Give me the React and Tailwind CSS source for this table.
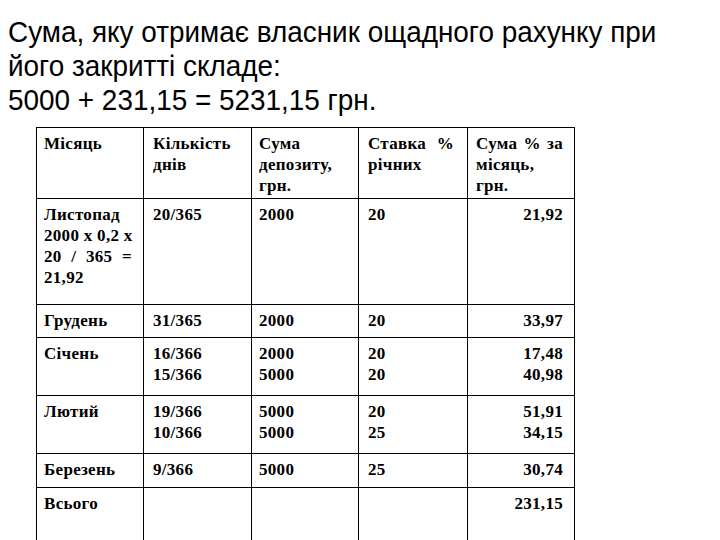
export default function App() {
  const td = "border border-black align-top pl-[7px] pr-[11px] pt-[5px]";
  const J = "whitespace-nowrap text-justify [text-align-last:justify]";
  const rows = [
    { h: "h-[106px]", c: [["Листопад", "2000 x 0,2 x", "20 / 365 =", "21,92"], ["20/365"], ["2000"], ["20"], ["21,92"]] },
    { h: "h-[33px]", c: [["Грудень"], ["31/365"], ["2000"], ["20"], ["33,97"]] },
    { h: "h-[58px]", c: [["Січень"], ["16/366", "15/366"], ["2000", "5000"], ["20", "20"], ["17,48", "40,98"]] },
    { h: "h-[58px]", c: [["Лютий"], ["19/366", "10/366"], ["5000", "5000"], ["20", "25"], ["51,91", "34,15"]] },
    { h: "h-[34px]", c: [["Березень"], ["9/366"], ["5000"], ["25"], ["30,74"]] },
    { h: "h-[80px]", c: [["Всього"], [], [], [], ["231,15"]] },
  ];
  return (
    <div className="w-[720px] h-[540px] overflow-hidden bg-white text-black">
      <div className="pl-[8px] pt-[15px] font-['Liberation_Sans',Arial,sans-serif] text-[30px] leading-[34px] whitespace-nowrap">
        <p className="origin-left scale-x-[0.93]">Сума, яку отримає власник ощадного рахунку при</p>
        <p className="origin-left scale-x-[0.93]">його закритті складе:</p>
        <p className="origin-left scale-x-[0.93]">5000 + 231,15 = 5231,15 грн.</p>
      </div>
      <table className="ml-[36px] mt-[10px] w-[538px] table-fixed border-collapse font-['Liberation_Serif','Times_New_Roman',serif] font-bold text-[17px] tracking-[0.3px] leading-[21px]">
        <colgroup>
          <col className="w-[107px]" />
          <col className="w-[108px]" />
          <col className="w-[107px]" />
          <col className="w-[109px]" />
          <col className="w-[107px]" />
        </colgroup>
        <tbody>
          <tr className="h-[71px]">
            <td className={td + " pt-[3px]"}>Місяць</td>
            <td className={td + " pt-[3px] pl-[9px]"}>Кількість днів</td>
            <td className={td + " pt-[3px]"}>Сума депозиту, грн.</td>
            <td className={td + " pt-[3px] pl-[9px] pr-[13px] text-justify"}>Ставка % річних</td>
            <td className={td + " pt-[3px] pl-[8px] pr-[9px] text-justify"}>Сума % за місяць, грн.</td>
          </tr>
          {rows.map((r, i) => (
            <tr key={i} className={r.h}>
              {r.c.map((lines, j) => (
                <td
                  key={j}
                  className={
                    td +
                    (j === 0 ? " pr-[10px]" : "") +
                    (j === 1 ? " pl-[9px]" : "") +
                    (j === 3 ? " pl-[9px]" : "") +
                    (j === 4 ? " text-right pr-[8px]" : "")
                  }
                >
                  {lines.map((l, k) => (
                    <div key={k} className={j === 0 && (k === 1 || k === 2) ? J : ""}>
                      {l}
                    </div>
                  ))}
                </td>
              ))}
            </tr>
          ))}
        </tbody>
      </table>
    </div>
  );
}
